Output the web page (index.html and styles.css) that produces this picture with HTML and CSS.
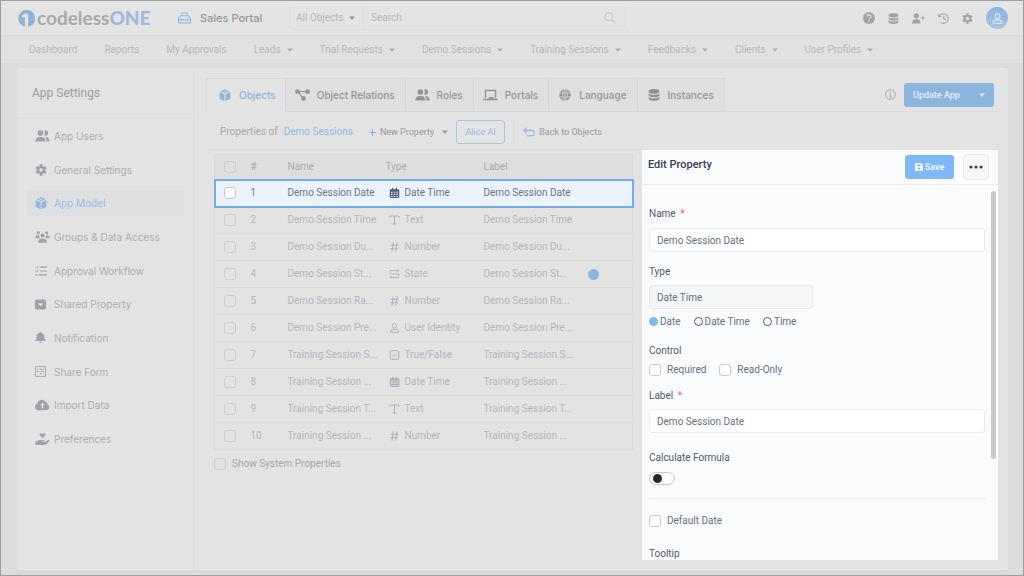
FILE: index.html
```html
<!DOCTYPE html>
<html lang="en">
<head>
<meta charset="utf-8">
<title>Sales Portal - App Settings</title>
<meta name="viewport" content="width=device-width, initial-scale=1">
<link rel="stylesheet" href="styles.css">
</head>
<body>
<svg class="sprite" aria-hidden="true">
  <symbol id="users" viewBox="0 0 24 20">
    <circle cx="8.5" cy="5" r="4.7"/><path d="M0 19c0-4.500 3-7.500 7-7.500h3c4 0 7 3 7 7.500z"/>
    <path d="M14.500.8a4.700 4.700 0 1 1 0 8.400 7 7 0 0 0 0-8.400zM17 11.500c4.200 0 7 3.300 7 7.500h-5c0-3-.8-5.500-3-7.500z"/>
  </symbol>
  <symbol id="gear" viewBox="0 0 20 20">
    <circle cx="10" cy="10" r="5" fill="none" stroke="currentColor" stroke-width="4"/>
    <path d="M10 .5v4M10 15.500v4M1.800 5.200l3.400 2M14.800 12.800l3.400 2M1.800 14.800l3.400-2M14.800 7.200l3.400-2" stroke="currentColor" stroke-width="4.600"/>
  </symbol>
  <symbol id="cube" viewBox="0 0 20 20">
    <path d="M10 0l7.500 3.700L10 7.300 2.500 3.700zM1 5.200l8.200 4V20L2.500 17C1.500 16.500 1 16 1 15zM19 5.200l-8.200 4V20l6.700-3c1-.5 1.500-1 1.500-2z"/>
    <path d="M5.800 2l7.600 3.700M14.200 2L6.600 5.700" stroke="#e4e4e4" stroke-width=".8"/>
  </symbol>
  <symbol id="groups" viewBox="0 0 24 20">
    <circle cx="5" cy="3" r="2.600"/><circle cx="19" cy="3" r="2.600"/><circle cx="12" cy="7.500" r="3.300"/>
    <path d="M0 12c0-3 1.500-5 4-5h2.500c-.5 2.500.3 4 1.500 5zM24 12c0-3-1.500-5-4-5h-2.500c.5 2.500-.3 4-1.500 5zM4.500 19.500c0-4 2.300-6.500 5.500-6.500h4c3.200 0 5.500 2.500 5.500 6.500z"/>
  </symbol>
  <symbol id="tasks" viewBox="0 0 20 20">
    <path d="M8 3.500h12M8 10h12M6 16.500h14" stroke="currentColor" stroke-width="2"/>
    <path d="M.5 3.500l2 2 3.500-4M.5 10l2 2L6 8" fill="none" stroke="currentColor" stroke-width="1.500"/><circle cx="2.500" cy="16.500" r="1.600"/>
  </symbol>
  <symbol id="caretbox" viewBox="0 0 20 20"><path fill-rule="evenodd" d="M3 1h14a3 3 0 0 1 3 3v12a3 3 0 0 1-3 3H3a3 3 0 0 1-3-3V4a3 3 0 0 1 3-3zM5 7.500l5 6 5-6z"/></symbol>
  <symbol id="bell" viewBox="0 0 20 20"><path d="M10 0c1 0 1.400.6 1.400 1.600C15 2.300 17 5 17 8.500c0 3.500.8 5 2.500 6.700V16.500H.5v-1.300C2.200 13.500 3 12 3 8.500 3 5 5 2.300 8.600 1.600 8.600.6 9 0 10 0zM7.500 17.600h5c-.2 1.500-1.200 2.400-2.500 2.400s-2.300-.9-2.500-2.400z"/></symbol>
  <symbol id="form" viewBox="0 0 20 20"><path d="M1 1h18v18H1zM4 6h2M8 6h8M4 10h4M10 10h6M9 14h3M14 14h2" fill="none" stroke="currentColor" stroke-width="1.600"/></symbol>
  <symbol id="cloud" viewBox="0 0 26 20"><path fill-rule="evenodd" d="M6 19a6 6 0 0 1-2-11.600A7.500 7.500 0 0 1 17.500 4a5 5 0 0 1 4.300 5A5.300 5.300 0 0 1 20 19zM11.700 15.500h2.600v-5h3L13 5.800l-4.300 4.700h3z"/></symbol>
  <symbol id="hand" viewBox="0 0 24 20"><path d="M12 8.500L8 4.600C6 2.500 8.500-1.200 12 1.500c3.500-2.700 6 1 4 3.100zM0 14h3c2-2 4-2.500 6-2.500h5c2 0 2 2.500 0 2.500h-3v1h5l5-3.300c2-1 3 .8 2 2L17.500 19c-1 .8-2 1-3 1H0z"/></symbol>
  <symbol id="relations" viewBox="0 0 24 20"><rect x="0" y="1" width="7" height="7" rx="1.500"/><rect x="17" y="1" width="7" height="7" rx="1.500"/><rect x="10" y="12" width="7" height="7" rx="1.500"/><path d="M6 4.500h12M5.500 6l6.500 8" stroke="currentColor" stroke-width="2"/></symbol>
  <symbol id="laptop" viewBox="0 0 24 20"><path d="M3.500 15V2.500h17V15M0 17.500h24" fill="none" stroke="currentColor" stroke-width="2.200"/><path d="M9 13.500h8v3H9z"/></symbol>
  <symbol id="globe" viewBox="0 0 20 20"><circle cx="10" cy="10" r="9.700"/><path d="M0 6.700h20M0 13.300h20M10 0v20M10 .5c-5.500 5-5.500 14 0 19M10 .5c5.500 5 5.500 14 0 19" fill="none" stroke="#e0e0e0" stroke-width="1.200"/></symbol>
  <symbol id="database" viewBox="0 0 20 20"><path d="M1 3.500C1 1.500 5 0 10 0s9 1.500 9 3.500v1C19 6.500 15 8 10 8S1 6.500 1 4.500zM1 7.500C3 9 6 9.700 10 9.700S17 9 19 7.500v3c0 2-4 3.400-9 3.400s-9-1.400-9-3.400zM1 13.400c2 1.600 5 2.200 9 2.200s7-.6 9-2.200v3c0 2-4 3.600-9 3.600s-9-1.600-9-3.600z"/></symbol>
  <symbol id="briefcase" viewBox="0 0 24 22"><path d="M5 7h14l4 4v9H1v-9zM7 6.500V2h10v4.500M1 14.500h22M7 12.500v4M17 12.500v4" fill="none" stroke="currentColor" stroke-width="2"/></symbol>
  <symbol id="search" viewBox="0 0 20 20"><circle cx="8" cy="8" r="6.600" fill="none" stroke="currentColor" stroke-width="1.600"/><path d="M13 13l6 6" stroke="currentColor" stroke-width="1.800"/></symbol>
  <symbol id="help" viewBox="0 0 20 20"><circle cx="10" cy="10" r="10"/><path d="M6.800 7.600C7 5.600 8.300 4.800 10 4.800c2 0 3.200 1.100 3.200 2.700 0 2.300-3.200 2.300-3.200 4.500" fill="none" stroke="#e4e4e4" stroke-width="2"/><circle cx="10" cy="14.800" r="1.300" fill="#e4e4e4"/></symbol>
  <symbol id="useradd" viewBox="0 0 24 20"><circle cx="8" cy="5" r="4.800"/><path d="M0 19c0-4.500 2.500-7.500 6.500-7.500h3c4 0 6.500 3 6.500 7.500z"/><path d="M20 5v8M16 9h8" stroke="currentColor" stroke-width="1.800"/></symbol>
  <symbol id="history" viewBox="0 0 20 20"><path d="M1.500 2v4.500H6M2 6.500A8.700 8.700 0 1 1 4.500 17M10.500 5v5.500l3.500 2.500" fill="none" stroke="currentColor" stroke-width="1.900"/></symbol>
  <symbol id="person" viewBox="0 0 20 20"><circle cx="10" cy="5.500" r="4.300" fill="none" stroke="currentColor" stroke-width="1.900"/><path d="M2 18.500c0-4 2-6 5-6h6c3 0 5 2 5 6z" fill="none" stroke="currentColor" stroke-width="1.900"/></symbol>
  <symbol id="info" viewBox="0 0 20 20"><circle cx="10" cy="10" r="8.800" fill="none" stroke="currentColor" stroke-width="1.800"/><path d="M8 9h2v5.500M8 14.500h4.500" fill="none" stroke="currentColor" stroke-width="1.600"/><circle cx="10" cy="5.800" r="1.300"/></symbol>
  <symbol id="caret" viewBox="0 0 10 6"><path d="M.3.500h9.400L5 5.800z"/></symbol>
  <symbol id="plus" viewBox="0 0 10 10"><path d="M5 0v10M0 5h10" stroke="currentColor" stroke-width="1.400"/></symbol>
  <symbol id="back" viewBox="0 0 22 18"><path d="M6.500 1L1.500 6l5 5M1.500 6H16c6 0 6 10 0 10H7" fill="none" stroke="currentColor" stroke-width="2"/></symbol>
  <symbol id="calendar" viewBox="0 0 20 20"><path fill-rule="evenodd" d="M3 2.500h2V0h2.500v2.500h5V0H15v2.500h2A2.500 2.500 0 0 1 19.500 5v12.500A2.500 2.500 0 0 1 17 20H3a2.500 2.500 0 0 1-2.500-2.500V5A2.500 2.500 0 0 1 3 2.500zM3 7.500v2.200h3.200V7.500zm5.300 0v2.200h3.400V7.500zm5.500 0v2.200H17V7.500zM3 11.700v2.200h3.200v-2.200zm5.300 0v2.200h3.400v-2.200zm5.500 0v2.200H17v-2.200zM3 15.800v2h3.200v-2zm5.300 0v2h3.400v-2zm5.500 0v2H17v-2z"/></symbol>
  <symbol id="text" viewBox="0 0 20 20"><path d="M1 6V2h18v4M10 2v16M6 18h8" fill="none" stroke="currentColor" stroke-width="2"/></symbol>
  <symbol id="hash" viewBox="0 0 20 20"><path d="M7.800 1L5 19M15 1l-2.800 18M2.500 6.500h16M1.500 13.500h16" stroke="currentColor" stroke-width="2"/></symbol>
  <symbol id="state" viewBox="0 0 24 22"><path d="M2 3.500h20M18.500.5l3 3-3 3M22 11H5C1 11 1 6 3 4.500M19 11c4 0 4 7 0 7.500H2M5.500 15.500l-3 3 3 3" fill="none" stroke="currentColor" stroke-width="2"/></symbol>
  <symbol id="check" viewBox="0 0 20 20"><rect x="1.500" y="1.500" width="17" height="17" rx="2" fill="none" stroke="currentColor" stroke-width="2"/><path d="M6 9.500l3 3.500 5.500-6" fill="none" stroke="currentColor" stroke-width="1.900"/></symbol>
  <symbol id="save" viewBox="0 0 20 20"><path fill-rule="evenodd" d="M2.500 0H15l5 5v12.500a2.500 2.500 0 0 1-2.500 2.500h-15A2.500 2.500 0 0 1 0 17.500v-15A2.500 2.500 0 0 1 2.500 0zM4 3.500V8h10V3.500zm6 8a2.800 2.800 0 1 0 0 5.600 2.800 2.800 0 0 0 0-5.600z"/></symbol>
  <symbol id="dots" viewBox="0 0 14 4"><circle cx="2" cy="2" r="1.500"/><circle cx="7" cy="2" r="1.500"/><circle cx="12" cy="2" r="1.500"/></symbol>
  <symbol id="logo" viewBox="0 0 32 32"><path d="M13 31.500A16 16 0 1 1 19 31.700V7h-4.500L8 10v4l5-1.500z"/><path d="M8 10l6-3.200h5V32h-4.500V12.500L8 14z" fill="#e4e4e4"/></symbol>
</svg>

<div class="app">
  <header class="topbar">
    <a class="brand" href="#"><svg class="brand-mark"><use href="#logo"/></svg><span>codeless<b>ONE</b></span></a>
    <a class="portal" href="#"><svg class="icon icon-wide"><use href="#briefcase"/></svg>Sales Portal</a>
    <form class="search">
      <div class="scope">
        <select aria-label="Search scope"><option>All Objects</option></select>
        <svg class="caret"><use href="#caret"/></svg>
      </div>
      <input type="search" placeholder="Search" aria-label="Search">
      <svg class="icon"><use href="#search"/></svg>
    </form>
    <div class="actions">
      <button aria-label="Help"><svg class="icon"><use href="#help"/></svg></button>
      <button aria-label="Data"><svg class="icon small"><use href="#database"/></svg></button>
      <button aria-label="Invite user"><svg class="icon add"><use href="#useradd"/></svg></button>
      <button aria-label="History"><svg class="icon small"><use href="#history"/></svg></button>
      <button aria-label="Settings"><svg class="icon small"><use href="#gear"/></svg></button>
      <button class="avatar" aria-label="Account"><svg class="icon small"><use href="#person"/></svg></button>
    </div>
  </header>

  <nav class="menu">
    <a href="#">Dashboard</a>
    <a href="#">Reports</a>
    <a href="#">My Approvals</a>
    <a href="#">Leads<svg class="caret"><use href="#caret"/></svg></a>
    <a href="#">Trial Requests<svg class="caret"><use href="#caret"/></svg></a>
    <a href="#">Demo Sessions<svg class="caret"><use href="#caret"/></svg></a>
    <a href="#">Training Sessions<svg class="caret"><use href="#caret"/></svg></a>
    <a href="#">Feedbacks<svg class="caret"><use href="#caret"/></svg></a>
    <a href="#">Clients<svg class="caret"><use href="#caret"/></svg></a>
    <a href="#">User Profiles<svg class="caret"><use href="#caret"/></svg></a>
  </nav>

  <div class="card">
    <aside class="sidebar">
      <h1>App Settings</h1>
      <nav class="side-list">
        <a href="#"><span class="side-icon"><svg class="icon icon-wide"><use href="#users"/></svg></span>App Users</a>
        <a href="#"><span class="side-icon"><svg class="icon"><use href="#gear"/></svg></span>General Settings</a>
        <a href="#" class="active" aria-current="page"><span class="side-icon"><svg class="icon"><use href="#cube"/></svg></span>App Model</a>
        <a href="#"><span class="side-icon"><svg class="icon icon-wide"><use href="#groups"/></svg></span>Groups &amp; Data Access</a>
        <a href="#"><span class="side-icon"><svg class="icon"><use href="#tasks"/></svg></span>Approval Workflow</a>
        <a href="#"><span class="side-icon"><svg class="icon small"><use href="#caretbox"/></svg></span>Shared Property</a>
        <a href="#"><span class="side-icon"><svg class="icon small"><use href="#bell"/></svg></span>Notification</a>
        <a href="#"><span class="side-icon"><svg class="icon small"><use href="#form"/></svg></span>Share Form</a>
        <a href="#"><span class="side-icon"><svg class="icon icon-wide"><use href="#cloud"/></svg></span>Import Data</a>
        <a href="#"><span class="side-icon"><svg class="icon icon-wide"><use href="#hand"/></svg></span>Preferences</a>
      </nav>
    </aside>

    <main class="content">
      <div class="tabbar">
        <nav class="tabs">
          <a href="#" class="active" aria-current="page"><svg class="icon"><use href="#cube"/></svg>Objects</a>
          <a href="#"><svg class="icon icon-wide"><use href="#relations"/></svg>Object Relations</a>
          <a href="#"><svg class="icon icon-wide"><use href="#users"/></svg>Roles</a>
          <a href="#"><svg class="icon icon-wide"><use href="#laptop"/></svg>Portals</a>
          <a href="#"><svg class="icon"><use href="#globe"/></svg>Language</a>
          <a href="#"><svg class="icon"><use href="#database"/></svg>Instances</a>
        </nav>
        <div class="publish">
          <svg class="icon small"><use href="#info"/></svg>
          <button class="update">Update App<svg class="caret"><use href="#caret"/></svg></button>
        </div>
      </div>

      <div class="toolbar">
        <span>Properties of</span>
        <a class="object" href="#">Demo Sessions</a>
        <button class="new"><svg class="plus"><use href="#plus"/></svg>New Property<svg class="caret"><use href="#caret"/></svg></button>
        <button class="alice">Alice AI</button>
        <a class="back" href="#"><svg class="icon"><use href="#back"/></svg>Back to Objects</a>
      </div>

      <div class="split">
        <section class="listing">
          <table>
            <colgroup><col class="c-check"><col class="c-num"><col class="c-name"><col class="c-type"><col><col class="c-dot"></colgroup>
            <thead>
              <tr><th><input type="checkbox" aria-label="Select all"></th><th>#</th><th>Name</th><th>Type</th><th>Label</th><th></th></tr>
            </thead>
            <tbody>
              <tr class="selected"><td><input type="checkbox" aria-label="Select row 1"></td><td>1</td><td>Demo Session Date</td><td><span class="type"><svg><use href="#calendar"/></svg>Date Time</span></td><td>Demo Session Date</td><td></td></tr>
              <tr><td><input type="checkbox" aria-label="Select row 2"></td><td>2</td><td>Demo Session Time</td><td><span class="type"><svg><use href="#text"/></svg>Text</span></td><td>Demo Session Time</td><td></td></tr>
              <tr><td><input type="checkbox" aria-label="Select row 3"></td><td>3</td><td>Demo Session Du...</td><td><span class="type"><svg><use href="#hash"/></svg>Number</span></td><td>Demo Session Du...</td><td></td></tr>
              <tr><td><input type="checkbox" aria-label="Select row 4"></td><td>4</td><td>Demo Session St...</td><td><span class="type"><svg><use href="#state"/></svg>State</span></td><td>Demo Session St...</td><td><span class="dot"></span></td></tr>
              <tr><td><input type="checkbox" aria-label="Select row 5"></td><td>5</td><td>Demo Session Ra...</td><td><span class="type"><svg><use href="#hash"/></svg>Number</span></td><td>Demo Session Ra...</td><td></td></tr>
              <tr><td><input type="checkbox" aria-label="Select row 6"></td><td>6</td><td>Demo Session Pre...</td><td><span class="type"><svg><use href="#person"/></svg>User Identity</span></td><td>Demo Session Pre...</td><td></td></tr>
              <tr><td><input type="checkbox" aria-label="Select row 7"></td><td>7</td><td>Training Session S...</td><td><span class="type"><svg><use href="#check"/></svg>True/False</span></td><td>Training Session S...</td><td></td></tr>
              <tr><td><input type="checkbox" aria-label="Select row 8"></td><td>8</td><td>Training Session ...</td><td><span class="type"><svg><use href="#calendar"/></svg>Date Time</span></td><td>Training Session ...</td><td></td></tr>
              <tr><td><input type="checkbox" aria-label="Select row 9"></td><td>9</td><td>Training Session T...</td><td><span class="type"><svg><use href="#text"/></svg>Text</span></td><td>Training Session T...</td><td></td></tr>
              <tr><td><input type="checkbox" aria-label="Select row 10"></td><td>10</td><td>Training Session ...</td><td><span class="type"><svg><use href="#hash"/></svg>Number</span></td><td>Training Session ...</td><td></td></tr>
            </tbody>
          </table>
          <label class="system"><input type="checkbox">Show System Properties</label>
        </section>

        <section class="panel">
          <header class="panel-head">
            <h2>Edit Property</h2>
            <button class="save"><svg><use href="#save"/></svg>Save</button>
            <button class="more" aria-label="More"><svg><use href="#dots"/></svg></button>
          </header>
          <div class="panel-body">
            <form class="fields">
              <div class="group">
                <label for="name">Name <em>*</em></label>
                <input id="name" type="text" value="Demo Session Date">
              </div>
              <div class="group">
                <label for="type">Type</label>
                <input id="type" type="text" value="Date Time" readonly>
                <div class="options radios">
                  <label><input type="radio" name="kind" checked>Date</label>
                  <label><input type="radio" name="kind">Date Time</label>
                  <label><input type="radio" name="kind">Time</label>
                </div>
              </div>
              <div class="group">
                <span class="caption">Control</span>
                <div class="options checks">
                  <label><input type="checkbox">Required</label>
                  <label><input type="checkbox">Read-Only</label>
                </div>
              </div>
              <div class="group label-group">
                <label for="label">Label <em>*</em></label>
                <input id="label" type="text" value="Demo Session Date">
              </div>
              <div class="group formula">
                <label for="formula">Calculate Formula</label>
                <input id="formula" class="switch" type="checkbox" role="switch">
              </div>
              <div class="options default"><label><input type="checkbox">Default Date</label></div>
              <span class="caption">Tooltip</span>
            </form>
            <div class="track"><div class="thumb"></div></div>
          </div>
        </section>
      </div>
    </main>
  </div>
</div>
</body>
</html>
```
FILE: styles.css
```css
* { box-sizing: border-box; }

body {
  margin: 0;
  font-family: Roboto, "Liberation Sans", sans-serif;
  font-size: 10px;
  line-height: 16px;
  color: #a6a7aa;
  background: #dbdbdb;
}

a { color: inherit; text-decoration: none; }
button, input, select { font: inherit; color: inherit; margin: 0; }
button { border: 0; padding: 0; background: none; display: flex; align-items: center; }
svg { fill: currentColor; flex: none; display: block; }
h1, h2 { margin: 0; font-weight: 400; }

.sprite { position: absolute; width: 0; height: 0; }
.icon { width: 12px; height: 12px; }
.icon.small { width: 11px; height: 11px; }
.icon.icon-wide { width: 15px; height: 12px; }
.icon.add { width: 13px; height: 11px; }
.caret { width: 6px; height: 4px; }

.app {
  display: flex;
  flex-direction: column;
  height: 100vh;
  min-height: 576px;
  border: 1px solid #a09fa0;
}

/* Header */
.topbar {
  display: flex;
  align-items: center;
  height: 34px;
  flex: none;
  padding: 0 15px 0 17px;
  background: #e4e4e4;
}
.brand {
  display: flex;
  align-items: center;
  gap: 2px;
  width: 133px;
  font-family: Lato, sans-serif;
  font-size: 19px;
  color: #aaa9a9;
  font-weight: 700;
}
.brand b { color: #9fbad9; }
.brand-mark { width: 17px; height: 17px; color: #8fb3d2; }
.portal {
  display: flex;
  align-items: center;
  gap: 8px;
  width: 112px;
  margin-left: 26px;
  font-family: Inter, sans-serif;
  font-size: 11px;
  font-weight: 500;
  color: #969698;
}
.portal .icon { color: #94bde0; }
.search {
  display: flex;
  align-items: center;
  width: 336px;
  height: 24px;
  padding-right: 8px;
  border: 1px solid #dedede;
  border-radius: 3px;
  color: #b5b6b8;
}
.scope {
  display: flex;
  align-items: center;
  gap: 3px;
  width: 74px;
  height: 22px;
  padding-left: 6px;
  border-right: 1px solid #dedede;
}
.scope select { width: 50px; border: 0; padding: 0; background: none; appearance: none; }
.scope .caret { color: #8d9096; }
.search input {
  flex: 1;
  min-width: 0;
  padding: 0 7px;
  border: 0;
  background: none;
  appearance: none;
}
.search input::placeholder { color: #b5b6b8; }
.search .icon { color: #c2c2c4; }
.actions {
  display: flex;
  align-items: center;
  gap: 13px;
  margin-left: auto;
  color: #a2a2a8;
}
.avatar {
  justify-content: center;
  width: 22px;
  height: 22px;
  border-radius: 50%;
  color: #e4ebf3;
  background: linear-gradient(#8bb3e0, #a9c3e0);
}

.menu {
  display: flex;
  align-items: center;
  gap: 27px;
  height: 28px;
  flex: none;
  padding: 0 28px;
  border-top: 1px solid #dddcdd;
  background: #e3e0e1;
  color: #b7b6b8;
}
.menu a { display: flex; align-items: center; gap: 6px; white-space: nowrap; }
.menu .caret { color: #aaaaac; }

/* Main card */
.card {
  display: flex;
  flex: 1;
  min-height: 0;
  margin: 5px 15px 5px 16px;
  border-radius: 3px;
  background: #e3e3e3;
}
.sidebar { width: 178px; flex: none; border-right: 1px solid #dcdddd; }
.sidebar h1 {
  padding: 17px 15px 15px;
  border-bottom: 1px solid #dcdddd;
  font-size: 12px;
  line-height: 17px;
  color: #9b9b9d;
}
.side-list {
  display: flex;
  flex-direction: column;
  justify-content: space-between;
  min-height: 329px;
  margin: 5px 10px 0;
  font-family: Inter, sans-serif;
}
.side-list a {
  display: flex;
  align-items: center;
  height: 26px;
  padding: 0 8px;
  border-radius: 4px;
  color: #adadb0;
}
.side-icon { width: 19px; color: #9da1aa; }
.side-list .active { background: #dddfe1; color: #9cbbe5; }
.active .side-icon { color: #94b6e0; }

.content {
  display: flex;
  flex-direction: column;
  flex: 1;
  min-width: 0;
  padding: 10px 10px 10px 11px;
}
.tabbar {
  display: flex;
  justify-content: space-between;
  height: 34px;
  flex: none;
  border-bottom: 1px solid #dbdbdb;
}
.tabs {
  display: flex;
  height: 34px;
  border: 1px solid #d9d9d9;
  border-bottom: 0;
  font-family: Inter, sans-serif;
}
.tabs a {
  display: flex;
  align-items: center;
  gap: 7px;
  padding: 0 10px 0 9px;
  border-left: 1px solid #d6d6d6;
  border-bottom: 1px solid #d6d6d6;
  background: #dfdfdf;
  color: #949495;
  font-weight: 500;
  white-space: nowrap;
}
.tabs .icon:not(.icon-wide) { margin: 0 1px; }
.tabs .active { padding: 0 9px 0 10px; border-color: #e3e3e3; background: #e3e3e3; color: #8db5e0; }
.publish { display: flex; align-items: center; gap: 8px; padding-right: 4px; }
.update {
  justify-content: space-between;
  width: 90px;
  height: 24px;
  padding: 0 9px;
  border-radius: 3px;
  background: #8bb5df;
  color: #e8eef5;
  font-size: 9px;
  font-weight: 500;
}

.toolbar {
  display: flex;
  align-items: center;
  height: 38px;
  flex: none;
  padding: 3px 0 0 14px;
  margin-right: 356px;
  border-bottom: 1px solid #dcdcdc;
  white-space: nowrap;
}
.object { margin: 0 16px 0 6px; color: #92b7e0; }
.new { gap: 4px; font-size: 9px; color: #98989b; }
.new .caret { margin-left: 4px; }
.plus { width: 7px; height: 7px; color: #84aedb; }
.alice {
  justify-content: center;
  width: 49px;
  height: 24px;
  margin: 0 8px;
  border: 1px solid #a4c2e3;
  border-radius: 3px;
  color: #98bbe3;
  font-size: 9px;
}
.back {
  display: flex;
  align-items: center;
  gap: 4px;
  height: 24px;
  padding-left: 9px;
  border-left: 1px solid #dadada;
  font-size: 9px;
  color: #98989b;
}
.back .icon { color: #90b6df; }

.split { display: grid; grid-template-columns: minmax(0, 1fr) 356px; flex: 1; min-height: 0; }
.listing { padding: 4px 9px 0 8px; min-width: 0; }

input[type="checkbox"]:not(.switch) {
  display: block;
  flex: none;
  width: 12px;
  height: 12px;
  border: 1px solid #cbcdd1;
  border-radius: 3px;
  background: none;
  appearance: none;
}

table {
  width: 100%;
  table-layout: fixed;
  border-collapse: collapse;
  border: 1px solid #dadada;
  color: #b4b6ba;
}
.c-check { width: 36px; }
.c-num { width: 37px; }
.c-name, .c-type { width: 98px; }
.c-dot { width: 45px; }
th, td { padding: 0; text-align: left; white-space: nowrap; font-weight: 400; }
th:first-child, td:first-child { padding-left: 9px; }
thead tr { height: 25px; background: #dedede; color: #ababad; }
tbody tr { height: 27px; border-bottom: 1px solid #dcdcdc; background: #e3e3e2; }
tbody .selected {
  background: #eaf3fe;
  color: #6e7480;
  outline: 2px solid #6fadec;
  outline-offset: -1px;
}
.selected input[type="checkbox"] { background: #fff; border-color: #c5cad2; }
.type { display: flex; align-items: center; gap: 5px; padding-left: 3px; }
.type svg { width: 11px; height: 10px; color: #aeb1b7; }
.selected .type svg { color: #4e5b78; }
.dot { display: block; width: 11px; height: 11px; border-radius: 50%; background: #8bb5df; }
.system { display: flex; align-items: center; gap: 6px; margin-top: 6px; }

/* Edit panel */
.panel {
  display: flex;
  flex-direction: column;
  min-height: 0;
  overflow: hidden;
  background: #fafbfd;
  color: #67707f;
}
.panel-head {
  display: flex;
  align-items: center;
  gap: 9px;
  height: 35px;
  flex: none;
  padding: 0 9px 0 6px;
  border-bottom: 1px solid #ebecef;
}
.panel-head h2 { flex: 1; padding-bottom: 4px; font-size: 11px; font-weight: 500; color: #353d50; }
.save {
  justify-content: center;
  gap: 2px;
  width: 49px;
  height: 24px;
  border-radius: 3px;
  background: #7eb8f6;
  color: #f5faff;
  font-size: 9px;
  font-weight: 600;
}
.save svg { width: 8px; height: 8px; }
.more {
  justify-content: center;
  width: 26px;
  height: 26px;
  border: 1px solid #ececee;
  border-radius: 4px;
  background: #f5f6f6;
  color: #30384a;
}
.more svg { width: 14px; height: 4px; }

.panel-body { display: flex; flex: 1; min-height: 0; overflow: hidden; }
.fields { flex: 1; padding: 20px 6px 0 7px; }
.group { display: flex; flex-direction: column; align-items: flex-start; }
.group > label, .caption { padding-top: 2px; line-height: 14px; color: #50586a; }
.caption { display: block; }
em { margin-left: 2px; color: #f2606a; font-style: normal; }
input[type="text"] {
  width: 100%;
  height: 24px;
  margin: 7px 0 11px;
  padding: 0 7px;
  border: 1px solid #eaebee;
  border-radius: 3px;
  background: #fff;
}
input[readonly] { width: 164px; margin: 6px 0 5px; background: #f4f5f5; }
.options { display: flex; }
.options label { display: flex; align-items: center; line-height: 15px; }
.radios { gap: 13px; margin-bottom: 13px; }
.radios label { gap: 2px; }
.checks { gap: 13px; margin: 4px 0 10px; }
.checks label, .default label { gap: 6px; }
.options input[type="checkbox"] { background: #fff; }
input[type="radio"] {
  width: 9px;
  height: 9px;
  border: 1px solid #555d6c;
  border-radius: 50%;
  appearance: none;
}
input[type="radio"]:checked { border-color: #80b7ef; background: #80b7ef; }
.label-group input[type="text"] { margin: 6px 0 16px; }
.formula { gap: 7px; padding-bottom: 13px; }
.switch {
  width: 26px;
  height: 13px;
  padding: 1px 3px;
  border: 1px solid #c3c5ca;
  border-radius: 7px;
  background: #fff;
  appearance: none;
}
.switch::before { content: ""; display: block; width: 9px; height: 9px; border-radius: 50%; background: #24272f; }
.default { margin: 0 0 17px; padding-top: 14px; border-top: 1px solid #ebecef; }
.track { width: 7px; padding-top: 6px; }
.thumb { width: 5px; height: 268px; border-radius: 3px; background: #c8c9cb; }
```
